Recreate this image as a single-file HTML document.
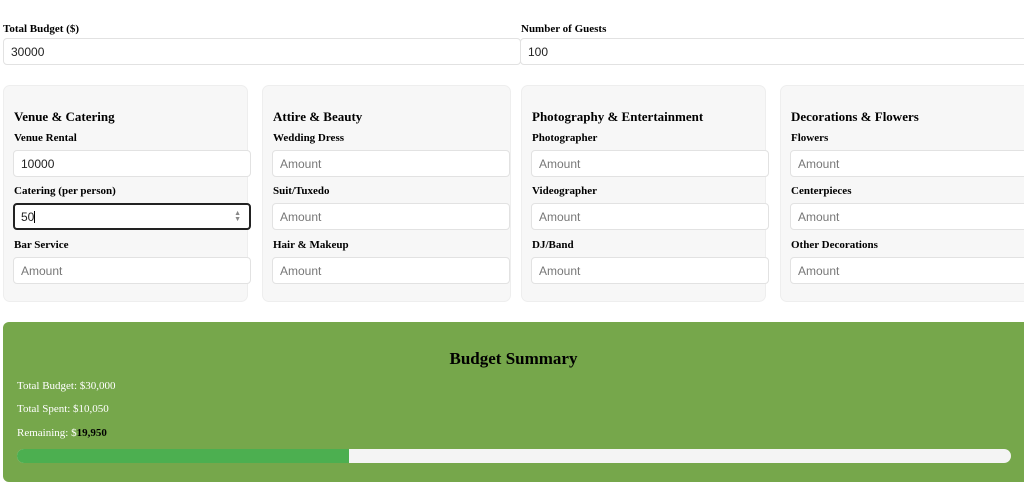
<!DOCTYPE html>
<html><head><style>
*{box-sizing:border-box;margin:0;padding:0}
body{width:1024px;height:473px;overflow:hidden;background:#fff;font-family:"Liberation Serif",serif;position:relative;color:#000}
.abs{position:absolute}
.lbl{position:absolute;font-size:11px;font-weight:bold}
.inp{position:absolute;height:27px;background:#fff;border:1px solid #e2e2e2;border-radius:4px;font-family:"Liberation Sans",sans-serif;font-size:12px;padding-left:7px;line-height:26px;color:#222}
.ph{color:#777}
.card{position:absolute;top:85px;height:217px;width:245px;background:#f7f7f7;border:1px solid #eeeeee;border-radius:7px}
.ttl{position:absolute;font-size:13px;font-weight:bold;top:109px}
.sum{position:absolute;color:#fff;font-size:11px;left:17px}
</style></head><body>
<div class="lbl" style="left:3px;top:23px">Total Budget ($)</div>
<div class="inp" style="left:3px;top:38px;width:518px">30000</div>
<div class="lbl" style="left:521px;top:23px">Number of Guests</div>
<div class="inp" style="left:520px;top:38px;width:520px">100</div>

<div class="card" style="left:3px"></div>
<div class="card" style="left:262px;width:249px"></div>
<div class="card" style="left:521px"></div>
<div class="card" style="left:780px;width:260px"></div>

<div class="ttl" style="left:14px">Venue &amp; Catering</div>
<div class="lbl" style="left:14px;top:132px">Venue Rental</div>
<div class="inp" style="left:13px;top:150px;width:238px">10000</div>
<div class="lbl" style="left:14px;top:185px">Catering (per person)</div>
<div class="inp" style="left:13px;top:203px;width:238px;border:2px solid #222;padding-left:6px;line-height:24px">50<span style="display:inline-block;width:1px;height:12px;background:#000;vertical-align:-2px"></span><span style="position:absolute;right:8px;top:0;font-size:7px;line-height:6px;color:#888;padding-top:6px">▲<br>▼</span></div>
<div class="lbl" style="left:14px;top:239px">Bar Service</div>
<div class="inp ph" style="left:13px;top:257px;width:238px">Amount</div>

<div class="ttl" style="left:273px">Attire &amp; Beauty</div>
<div class="lbl" style="left:273px;top:132px">Wedding Dress</div>
<div class="inp ph" style="left:272px;top:150px;width:238px">Amount</div>
<div class="lbl" style="left:273px;top:185px">Suit/Tuxedo</div>
<div class="inp ph" style="left:272px;top:203px;width:238px">Amount</div>
<div class="lbl" style="left:273px;top:239px">Hair &amp; Makeup</div>
<div class="inp ph" style="left:272px;top:257px;width:238px">Amount</div>

<div class="ttl" style="left:532px">Photography &amp; Entertainment</div>
<div class="lbl" style="left:532px;top:132px">Photographer</div>
<div class="inp ph" style="left:531px;top:150px;width:238px">Amount</div>
<div class="lbl" style="left:532px;top:185px">Videographer</div>
<div class="inp ph" style="left:531px;top:203px;width:238px">Amount</div>
<div class="lbl" style="left:532px;top:239px">DJ/Band</div>
<div class="inp ph" style="left:531px;top:257px;width:238px">Amount</div>

<div class="ttl" style="left:791px">Decorations &amp; Flowers</div>
<div class="lbl" style="left:791px;top:132px">Flowers</div>
<div class="inp ph" style="left:790px;top:150px;width:250px">Amount</div>
<div class="lbl" style="left:791px;top:185px">Centerpieces</div>
<div class="inp ph" style="left:790px;top:203px;width:250px">Amount</div>
<div class="lbl" style="left:791px;top:239px">Other Decorations</div>
<div class="inp ph" style="left:790px;top:257px;width:250px">Amount</div>

<div class="abs" style="left:3px;top:322px;width:1030px;height:160px;background:#76a74b;border-radius:6px"></div>
<div class="abs" style="left:3px;top:349px;width:1021px;text-align:center;font-size:17px;font-weight:bold">Budget Summary</div>
<div class="sum" style="top:380px">Total Budget: $30,000</div>
<div class="sum" style="top:403px">Total Spent: $10,050</div>
<div class="sum" style="top:427px">Remaining: $<b style="color:#000">19,950</b></div>
<div class="abs" style="left:17px;top:449px;width:994px;height:14px;background:#f4f4f4;border-radius:7px;overflow:hidden"><div style="width:332px;height:14px;background:#4caf50"></div></div>
</body></html>
